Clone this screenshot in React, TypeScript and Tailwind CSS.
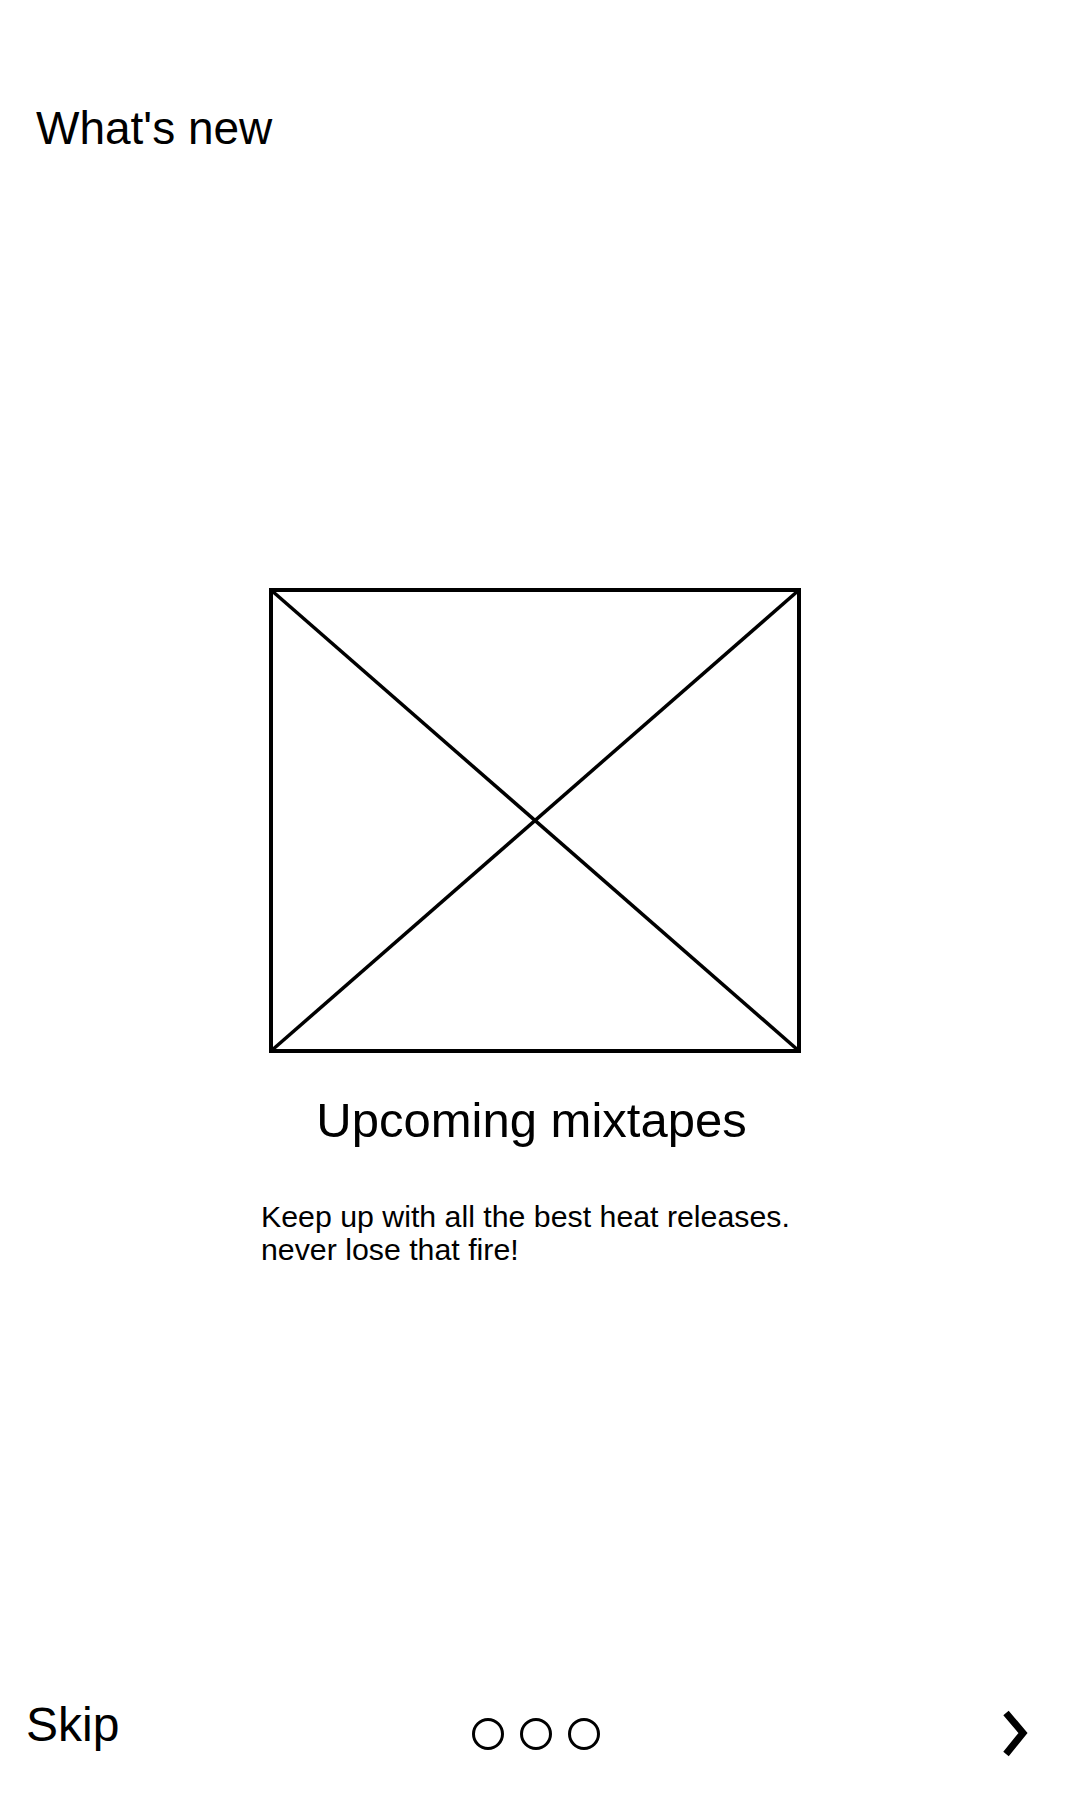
export default function App() {
  return (
    <div className="flex h-[1800px] w-[1080px] flex-col bg-white text-black font-['Liberation_Sans',Arial,sans-serif]">
      {/* Header */}
      <header className="pl-[36px] pt-[105px]">
        <h1 className="text-[46px] leading-[46px]">What&apos;s new</h1>
      </header>

      {/* Slide */}
      <main className="flex flex-col pl-[261px]">
        <div className="ml-[8px] mt-[437px] h-[465px] w-[532px]">
          <svg width="532" height="465" viewBox="0 0 532 465" fill="none" stroke="black">
            <rect x="2" y="2" width="528" height="461" strokeWidth="4" />
            <line x1="2" y1="2" x2="530" y2="463" strokeWidth="3.5" />
            <line x1="530" y1="2" x2="2" y2="463" strokeWidth="3.5" />
          </svg>
        </div>
        <h2 className="ml-[8px] mt-[43px] w-[532px] pr-[7px] text-center text-[49px] leading-[48px]">
          Upcoming mixtapes
        </h2>
        <p className="mt-[56px] text-[30.3px] leading-[33px]">
          Keep up with all the best heat releases.
          <br />
          never lose that fire!
        </p>
      </main>

      <div className="flex-1" />

      {/* Footer */}
      <footer className="flex h-[98px] items-start pl-[26px] pr-[49px]">
        <button className="w-[446px] text-left text-[48px] leading-[46px]">Skip</button>
        <div className="mt-[16px] flex gap-[16px]">
          <span className="h-[32px] w-[32px] rounded-full border-[3px] border-black" />
          <span className="h-[32px] w-[32px] rounded-full border-[3px] border-black" />
          <span className="h-[32px] w-[32px] rounded-full border-[3px] border-black" />
        </div>
        <div className="flex-1" />
        <button className="mt-[7px]">
          <svg width="32" height="48" viewBox="0 0 32 48" fill="none" stroke="black" strokeWidth="7">
            <polyline points="7,4 24,24 7,45" strokeLinejoin="miter" />
          </svg>
        </button>
      </footer>
    </div>
  );
}
